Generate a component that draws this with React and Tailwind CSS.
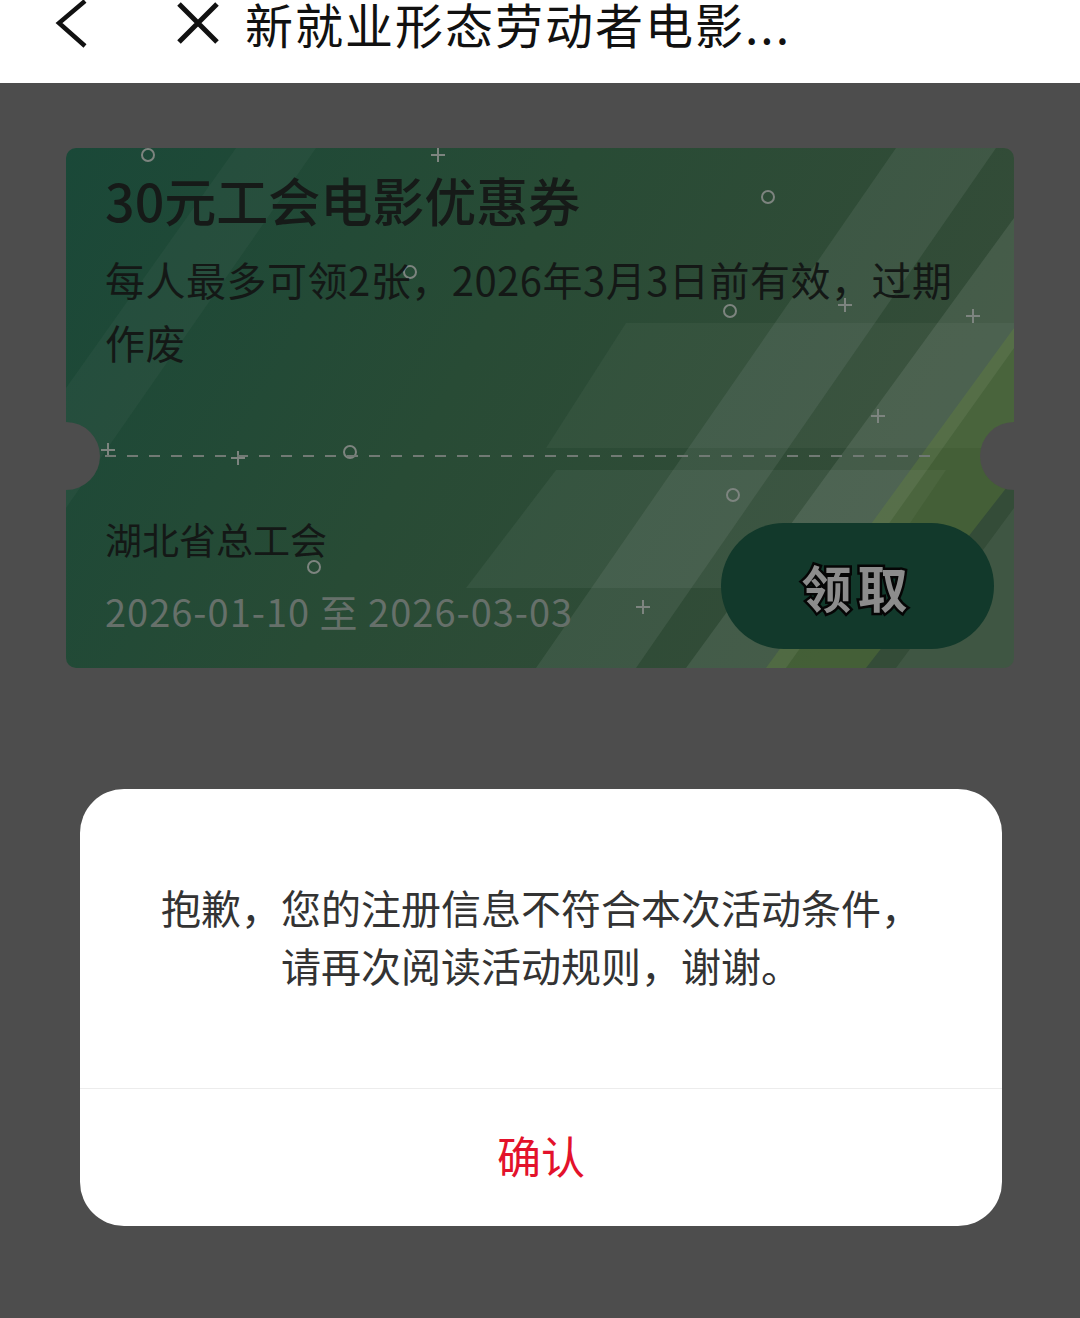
import React from "react";

// decorative rings and crosses scattered over the coupon face (card coordinates)
const rings = [
  [82, 7],
  [702, 49],
  [344, 124],
  [664, 163],
  [284, 304],
  [667, 347],
  [248, 419],
];
const crosses = [
  [372, 7],
  [172, 310],
  [42, 302],
  [812, 268],
  [907, 168],
  [779, 157],
  [577, 459],
];

function CouponBackground() {
  return (
    <svg
      className="absolute inset-0 h-full w-full"
      viewBox="0 0 948 520"
      preserveAspectRatio="none"
    >
      <defs>
        <linearGradient id="couponBase" x1="0" y1="0" x2="1" y2="0.3">
          <stop offset="0" stopColor="#1a4838" />
          <stop offset="0.5" stopColor="#284b35" />
          <stop offset="1" stopColor="#344c38" />
        </linearGradient>
      </defs>
      <rect width="948" height="520" fill="url(#couponBase)" />
      <polygon points="0,240 170,0 250,0 0,360" fill="#ffffff" opacity="0.03" />
      <polygon points="470,520 830,0 930,0 570,520" fill="#ffffff" opacity="0.07" />
      <polygon points="560,175 948,175 948,300 480,300" fill="#ffffff" opacity="0.04" />
      <polygon points="490,322 880,322 800,440 400,440" fill="#ffffff" opacity="0.05" />
      <polygon points="620,520 948,70 948,200 720,520" fill="#ffffff" opacity="0.09" />
      <polygon points="700,520 948,180 948,330 800,520" fill="#6b8a34" opacity="0.3" />
      <polygon points="830,520 948,360 948,520" fill="#ffffff" opacity="0.06" />
      {rings.map(([x, y], i) => (
        <circle key={"r" + i} cx={x} cy={y} r="6" fill="none" stroke="#7d847f" strokeWidth="2" />
      ))}
      {crosses.map(([x, y], i) => (
        <path
          key={"c" + i}
          d={`M${x - 7} ${y}H${x + 7}M${x} ${y - 7}V${y + 7}`}
          stroke="#7d847f"
          strokeWidth="2"
        />
      ))}
    </svg>
  );
}

function Coupon() {
  return (
    <div className="relative h-[520px] overflow-hidden rounded-[10px]">
      <CouponBackground />
      {/* ticket notches */}
      <div className="absolute left-[-34px] top-[274px] h-[68px] w-[68px] rounded-full bg-[#4d4d4d]" />
      <div className="absolute right-[-34px] top-[274px] h-[68px] w-[68px] rounded-full bg-[#4d4d4d]" />

      <div className="relative flex h-full flex-col">
        <div className="h-[307px] pl-[39px] pr-[50px] pt-[17px]">
          <h2 className="text-[52px] font-medium leading-[70px] text-[#161a18]">
            30元工会电影优惠券
          </h2>
          <p className="mt-[13px] text-[40px] leading-[63px] tracking-[0.5px] text-[#141816]">
            每人最多可领2张，2026年3月3日前有效，过期作废
          </p>
        </div>
        <div className="ml-[39px] mr-[79px] h-[2px] bg-[repeating-linear-gradient(to_right,#717a74_0_11px,transparent_11px_22px)]" />
        <div className="flex flex-1 justify-between pl-[39px] pr-[20px]">
          <div className="pt-[57px]">
            <p className="text-[37px] leading-[50px] text-[#141816]">湖北省总工会</p>
            <p className="mt-[21px] text-[38px] leading-[52px] tracking-[1px] text-[#66706a]">
              2026-01-10 至 2026-03-03
            </p>
          </div>
          <button className="mt-[66px] flex h-[126px] w-[273px] items-center justify-center rounded-full bg-[#12392b]">
            <span className="text-[50px] font-bold tracking-[6px] text-[#8c8c8c] [-webkit-text-stroke:5px_#050505] [paint-order:stroke_fill]">
              领取
            </span>
          </button>
        </div>
      </div>
    </div>
  );
}

function Header() {
  return (
    <header className="flex h-[83px] items-start bg-white">
      <svg className="ml-[54px] mt-[-2px] h-[52px] w-[36px]" viewBox="0 0 36 52">
        <path d="M31 3 L5 25 L31 48" fill="none" stroke="#111" strokeWidth="4.5" strokeLinejoin="miter" />
      </svg>
      <svg className="ml-[86px] mt-[2px] h-[42px] w-[44px]" viewBox="0 0 44 42">
        <path d="M3 2 L41 40 M41 2 L3 40" fill="none" stroke="#111" strokeWidth="5" />
      </svg>
      <h1 className="ml-[25px] text-[48px] leading-[46px] tracking-[2px] text-[#111]">
        新就业形态劳动者电影...
      </h1>
    </header>
  );
}

export default function App() {
  return (
    <div className="relative h-[1318px] w-[1080px] overflow-hidden bg-[#4d4d4d] font-['Noto_Sans_CJK_SC','Noto_Sans',sans-serif]">
      <Header />
      <main className="px-[66px] pt-[65px]">
        <Coupon />
      </main>

      {/* alert dialog */}
      <div className="absolute left-[80px] top-[789px] flex h-[437px] w-[922px] flex-col overflow-hidden rounded-[44px] bg-white">
        <div className="flex h-[299px] items-center justify-center pb-[6px]">
          <p className="text-center text-[40px] leading-[58px] text-[#333]">
            抱歉，您的注册信息不符合本次活动条件，
            <br />
            请再次阅读活动规则，谢谢。
          </p>
        </div>
        <div className="h-px bg-[#ececec]" />
        <button className="flex flex-1 items-center justify-center pb-[5px] text-[44px] text-[#e3122b]">
          确认
        </button>
      </div>
    </div>
  );
}
